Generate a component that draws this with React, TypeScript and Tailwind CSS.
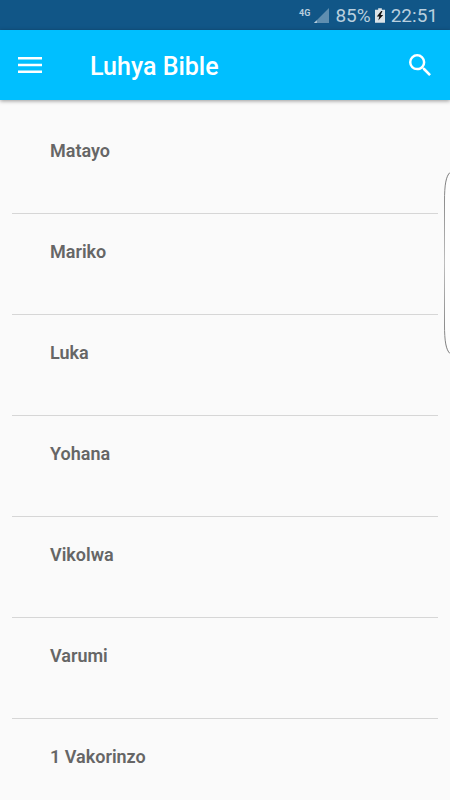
import { useState } from 'react';

const books = ['Matayo', 'Mariko', 'Luka', 'Yohana', 'Vikolwa', 'Varumi', '1 Vakorinzo'];

function StatusBar() {
  return (
    <div className="flex h-[30px] shrink-0 items-center justify-end bg-[#115687] pt-px pr-3 text-[#b9cfde]">
      <span className="mb-1.5 text-[9px] leading-3 font-bold">4G</span>
      <svg className="ml-1 h-[15px] w-[15px]" viewBox="0 0 16 16" aria-hidden="true">
        <path d="M16 0v16H0z" fill="#5f8eb0" />
        <path d="M3 13v3H0z" fill="#b9cfde" />
      </svg>
      <span className="ml-1.5 text-[19px] leading-6">85%</span>
      <svg className="ml-1 h-[15px] w-[10px]" viewBox="0 0 11 16" aria-hidden="true">
        <path d="M3.5 0h4v1.6H11V16H0V1.6h3.5z" fill="#dbe3e8" />
        <path d="M6.8 3 2 9h2.8L3.6 13.6 9 7.4H6.2L8.2 3z" fill="#111" />
      </svg>
      <span className="ml-1.5 text-[19px] leading-6">22:51</span>
    </div>
  );
}

function AppBar({ onMenu, onSearch }: { onMenu: () => void; onSearch: () => void }) {
  return (
    <header className="relative z-10 flex h-[70px] shrink-0 items-center bg-[#00bfff] px-[18px] text-white shadow-[0_1px_4px_rgba(0,0,0,0.4)]">
      <button type="button" aria-label="Menu" onClick={onMenu}>
        <svg className="h-4 w-6" viewBox="0 0 24 16" fill="currentColor" aria-hidden="true">
          <path d="M0 0h24v2.6H0zM0 6.7h24v2.6H0zM0 13.4h24V16H0z" />
        </svg>
      </button>
      <h1 className="ml-12 flex-1 pt-1 text-[25px] leading-8 font-medium">Luhya Bible</h1>
      <button type="button" aria-label="Search" onClick={onSearch}>
        <svg className="mr-px h-[22px] w-[22px]" viewBox="3 3 17.49 17.49" fill="currentColor" aria-hidden="true">
          <path d="M15.5 14h-.79l-.28-.27A6.471 6.471 0 0 0 16 9.5 6.5 6.5 0 1 0 9.5 16c1.61 0 3.09-.59 4.23-1.57l.27.28v.79l5 4.99L20.49 19l-4.99-5zm-6 0C7.01 14 5 11.99 5 9.5S7.01 5 9.5 5 14 7.01 14 9.5 11.99 14 9.5 14z" />
        </svg>
      </button>
    </header>
  );
}

export default function App() {
  const [selected, setSelected] = useState('');

  return (
    <div className="relative flex h-screen flex-col overflow-hidden bg-[#fafafa] font-[Roboto,sans-serif]">
      <StatusBar />
      <AppBar
        onMenu={() => console.log('menu')}
        onSearch={() => console.log('search from', selected)}
      />
      <main className="flex-1 overflow-y-auto px-3 pt-[13px] [scrollbar-width:none]">
        <ul className="divide-y divide-[#d6d6d6]">
          {books.map((book) => (
            <li key={book}>
              <button
                type="button"
                className="block h-[100px] w-full px-[38px] pt-[26px] pb-[50px] text-left text-[18px] leading-6 font-semibold text-[#666]"
                onClick={() => setSelected(book)}
              >
                {book}
              </button>
            </li>
          ))}
        </ul>
      </main>

      {/* edge panel handle */}
      <svg
        className="absolute top-[171px] right-0 z-20 h-[184px] w-[7px]"
        viewBox="0 0 7 184"
        aria-hidden="true"
      >
        <defs>
          <linearGradient id="edge" gradientUnits="userSpaceOnUse" x1="0" y1="0" x2="0" y2="184">
            <stop offset="0" stopColor="#777" />
            <stop offset="0.5" stopColor="#bdbdbd" />
            <stop offset="1" stopColor="#777" />
          </linearGradient>
        </defs>
        <path d="M7 1.5C3 5 1.5 14 1.5 30v124c0 16 1.5 25 5.5 28.5" fill="#fdfdfd" stroke="url(#edge)" />
      </svg>
    </div>
  );
}
